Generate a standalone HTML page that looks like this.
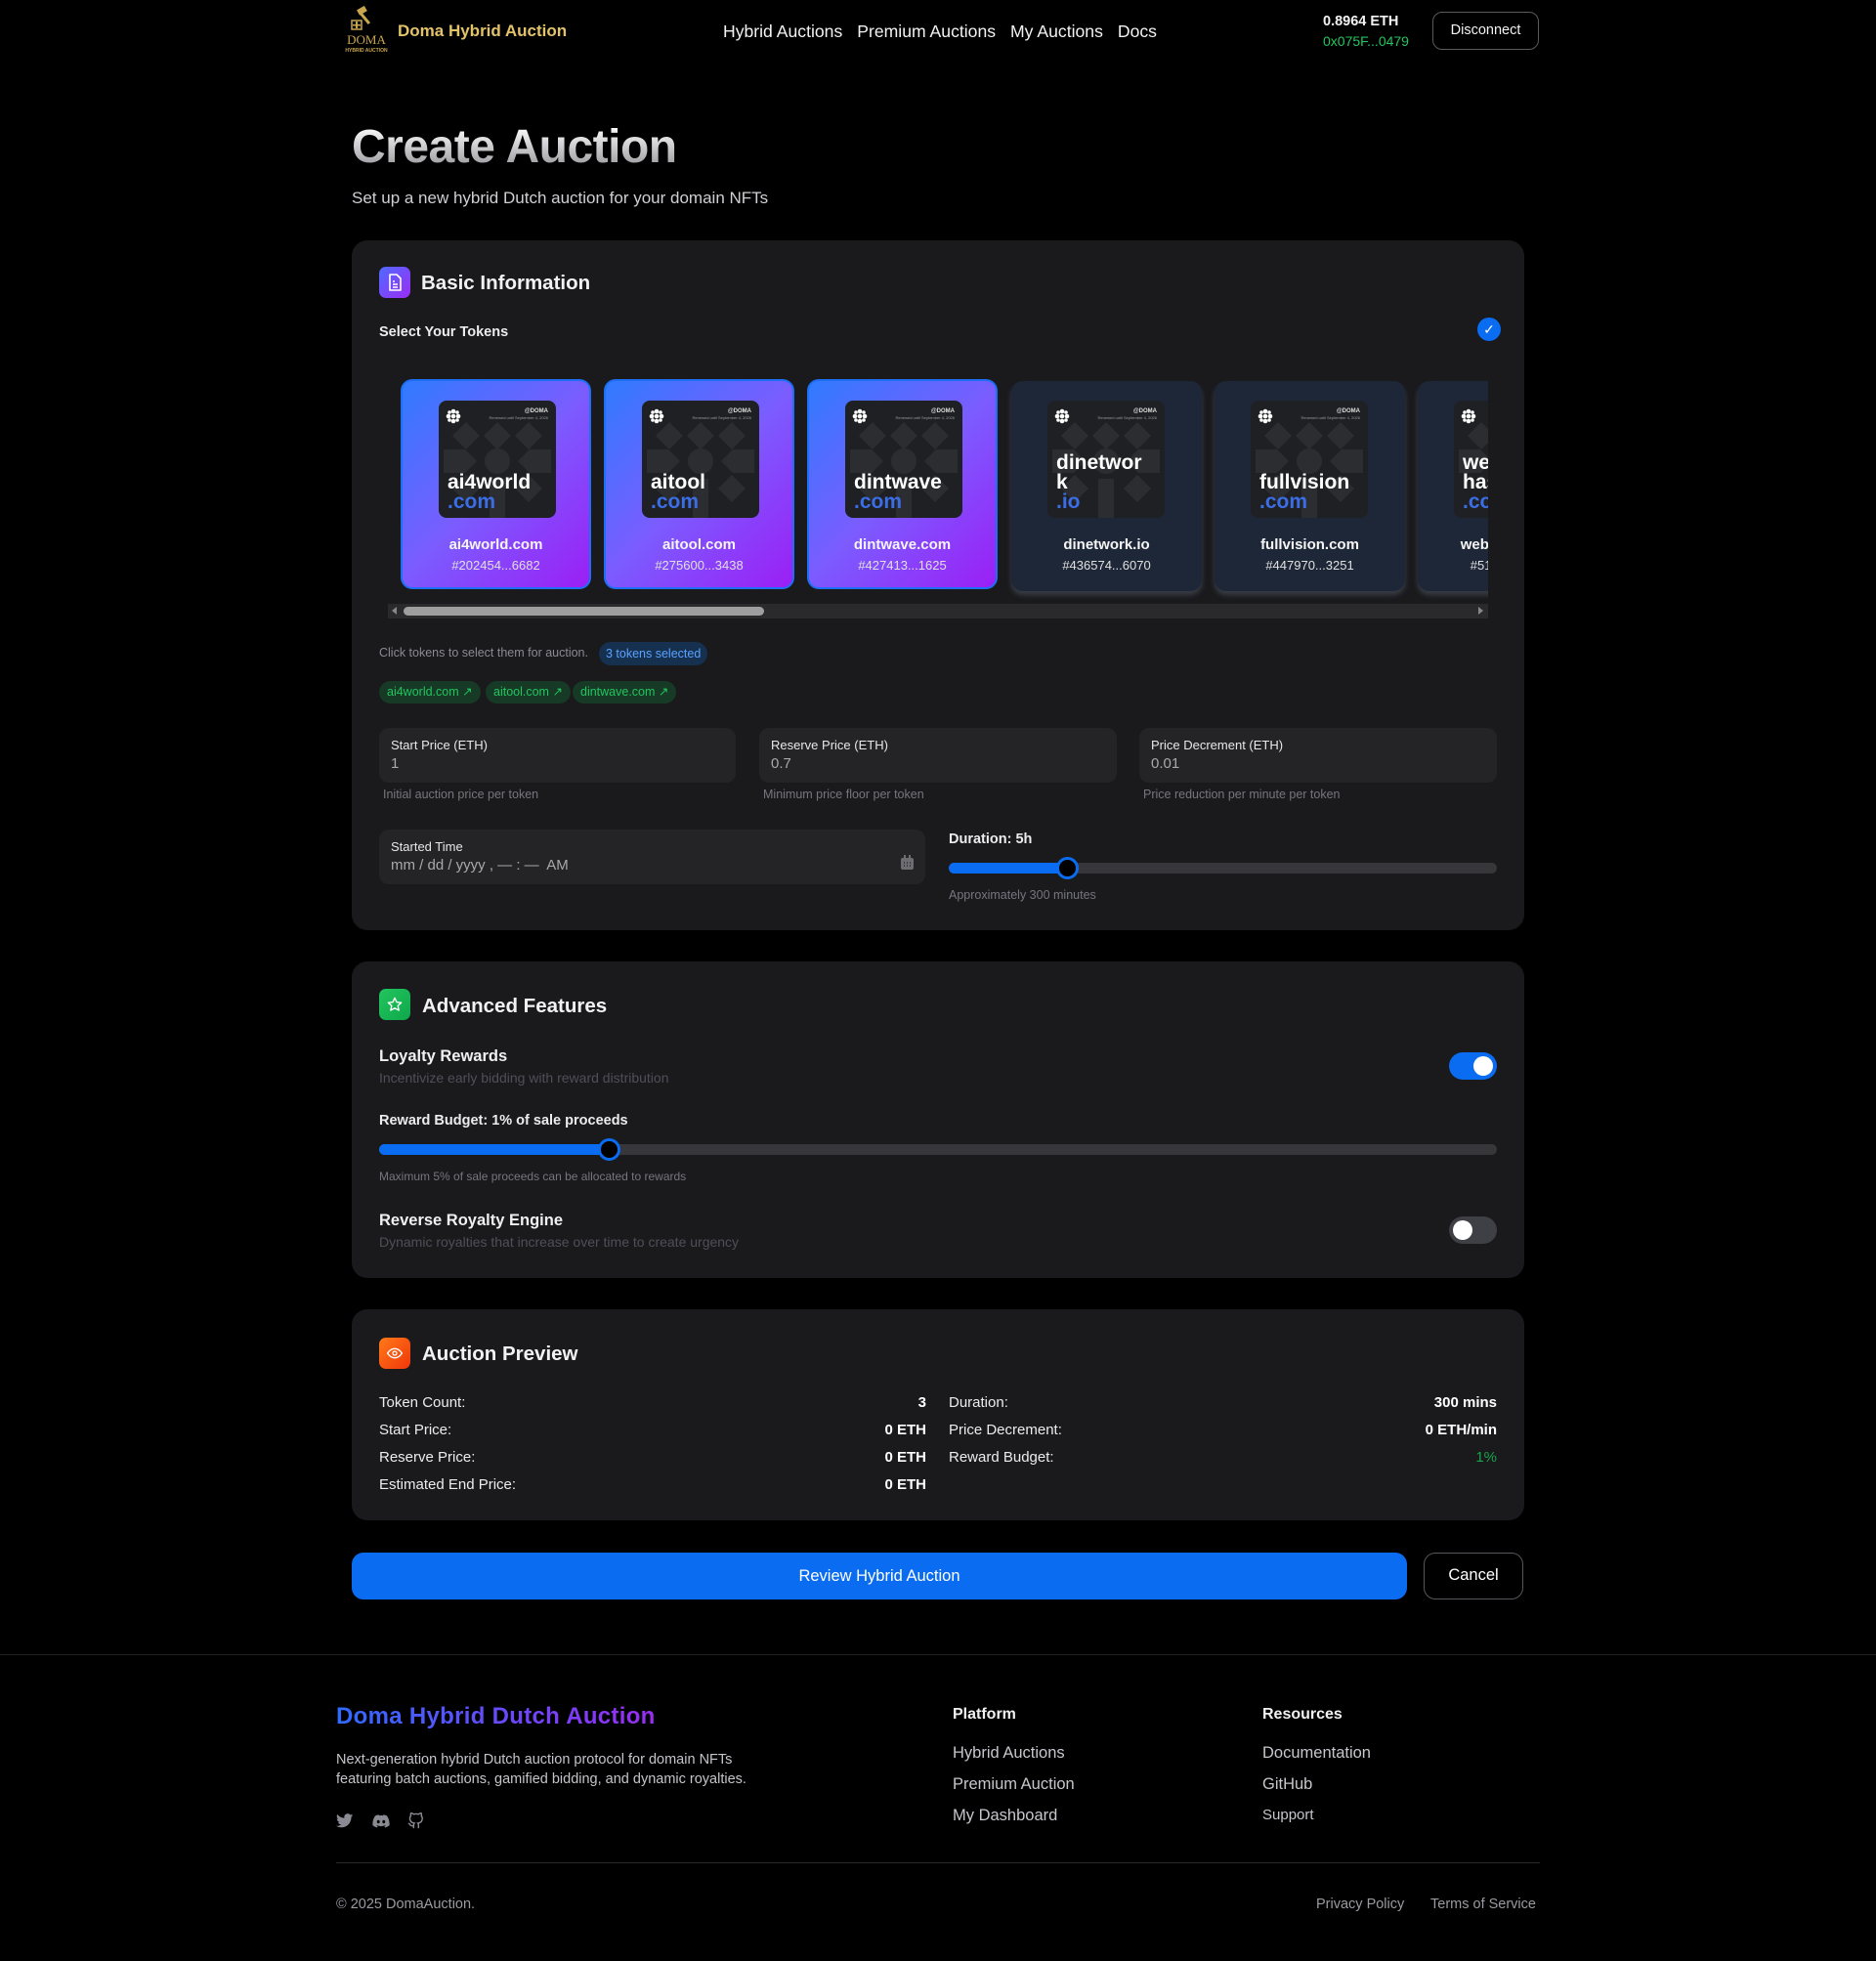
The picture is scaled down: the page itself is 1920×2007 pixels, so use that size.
<!DOCTYPE html>
<html><head><meta charset="utf-8"><style>
*{box-sizing:border-box;margin:0;padding:0}
body{width:1920px;height:2007px;background:#000;font-family:"Liberation Sans",sans-serif;color:#fff;position:relative;overflow:hidden}
.a{position:absolute;white-space:nowrap}
.card{position:absolute;left:360px;width:1200px;background:#1a1a1d;border-radius:16px}
.ic{position:absolute;width:32px;height:32px;border-radius:7px;display:flex;align-items:center;justify-content:center}
.h2{font-size:20.5px;font-weight:bold;color:#f2f2f2}
.tok{position:absolute;top:388px;width:195px;height:215px;border-radius:12px}
.sel{background:linear-gradient(135deg,#2f7bff 0%,#7b5cff 50%,#9b1ff5 100%);border:2px solid #1d6ff5}
.uns{background:#1e2737;box-shadow:0 4px 6px rgba(120,130,150,.35)}
.img{position:absolute;left:37px;top:20px;width:120px;height:120px;background:#1f2023;border-radius:8px;overflow:hidden}
.tn{position:absolute;left:0;width:100%;text-align:center;top:159px;font-size:15px;font-weight:bold;color:#f5f5f5}
.ti{position:absolute;left:0;width:100%;text-align:center;top:181px;font-size:13px;color:#e0e0e0}
.nm{position:absolute;left:9px;font-size:21px;font-weight:bold;line-height:20px;color:#fff}
.nm b{color:#3b6ee6}
.inp{position:absolute;background:#242427;border-radius:10px}
.lbl{position:absolute;left:12px;top:10px;font-size:13px;color:#e8e8e8}
.val{position:absolute;left:12px;top:28px;font-size:15px;color:#a8a8ad}
.help{position:absolute;font-size:12.5px;color:#76767e}
.track{position:absolute;height:11px;border-radius:6px;background:#36363b}
.fill{position:absolute;left:0;top:0;height:11px;border-radius:6px 0 0 6px;background:#0a6cf0}
.thumb{position:absolute;top:-6px;width:23px;height:23px;border-radius:50%;background:#000;border:3px solid #0a6cf0}
.row{position:absolute;font-size:15px;color:#ececec}
.rv{position:absolute;font-size:15px;font-weight:bold;text-align:right;color:#fff}
.chip{position:absolute;top:697px;height:23px;border-radius:12px;background:#163a25;color:#22c55e;font-size:12.5px;line-height:23px;padding:0 8px}
.fl{position:absolute;font-size:16.5px;color:#c6c6cc}
.nav{position:absolute;left:740px;top:22px;display:flex;gap:15px;font-size:17.6px;color:#f2f2f2;white-space:nowrap}
</style></head><body>

<svg class="a" style="left:348px;top:6px" width="54" height="48" viewBox="0 0 54 48">
<g fill="#c9a54f"><rect x="18" y="2" width="9" height="6" transform="rotate(-30 22 5)"/><rect x="24" y="6" width="3" height="14" transform="rotate(-40 25 13)"/><rect x="12" y="15" width="10" height="9" fill="none" stroke="#c9a54f" stroke-width="1.5"/><rect x="16" y="16" width="2" height="7"/><rect x="13" y="19" width="8" height="1.5"/></g>
<text x="27" y="39" text-anchor="middle" font-family="Liberation Serif" font-size="13" fill="#c9a54f">DOMA</text>
<text x="27" y="47" text-anchor="middle" font-family="Liberation Sans" font-size="5" font-weight="bold" fill="#c9a54f">HYBRID AUCTION</text></svg>
<div class="a" style="left:407px;top:22px;font-size:17px;font-weight:bold;color:#e3c36a">Doma Hybrid Auction</div>
<div class="nav"><span>Hybrid Auctions</span><span>Premium Auctions</span><span>My Auctions</span><span>Docs</span></div>
<div class="a" style="left:1354px;top:14px;font-size:14.5px;font-weight:bold;color:#f2f2f2">0.8964 ETH</div>
<div class="a" style="left:1354px;top:34px;font-size:14px;color:#22c55e">0x075F...0479</div>
<div class="a" style="left:1466px;top:12px;width:109px;height:39px;border:1.5px solid #5a5a5f;border-radius:10px;text-align:center;line-height:36px;font-size:14.5px;color:#f2f2f2">Disconnect</div>

<div class="a" style="left:360px;top:123px;font-size:48px;font-weight:bold;background:linear-gradient(180deg,#ffffff 10%,#8a8a8f 100%);-webkit-background-clip:text;color:transparent;letter-spacing:-0.5px">Create Auction</div>
<div class="a" style="left:360px;top:193px;font-size:17px;color:#cfcfd4">Set up a new hybrid Dutch auction for your domain NFTs</div>

<div class="card" style="top:246px;height:706px"></div>
<div class="ic" style="left:388px;top:273px;background:linear-gradient(135deg,#4f6bff,#9b2cf5)"><svg width="16" height="18" viewBox="0 0 16 18"><path d="M3 1h7l4 4v12H3z" fill="none" stroke="#fff" stroke-width="1.6" stroke-linejoin="round"/><path d="M6 8h2M6 11h5M6 14h5" stroke="#fff" stroke-width="1.5"/></svg></div>
<div class="a h2" style="left:431px;top:278px">Basic Information</div>
<div class="a" style="left:388px;top:332px;font-size:14.5px;font-weight:bold;color:#ececec">Select Your Tokens</div>
<div class="a" style="left:1512px;top:325px;width:24px;height:24px;border-radius:50%;background:#0a6cf0;color:#fff;font-size:14px;text-align:center;line-height:24px">✓</div>

<div class="a" style="left:397px;top:380px;width:1126px;height:235px;overflow:hidden">
 <div class="tok sel" style="left:13px;top:8px"><div class="img"><svg width="120" height="120"><g fill="#2c2d31"><path d="M28 22l14 14-14 14-14-14z M60 22l14 14-14 14-14-14z M92 22l14 14-14 14-14-14z"/><path d="M5 50h22l12 12-12 12H5z M115 50H93L81 62l12 12h22z"/><circle cx="60" cy="62" r="13"/><path d="M28 76l14 14-14 14-14-14z M92 76l14 14-14 14-14-14z M52 80h16v40H52z"/></g><g fill="#fff"><circle cx="15" cy="16" r="2.3"/><circle cx="20" cy="16" r="2.3"/><circle cx="10" cy="16" r="2.3"/><circle cx="15" cy="11" r="2.3"/><circle cx="15" cy="21" r="2.3"/><circle cx="11" cy="12" r="1.8"/><circle cx="19" cy="12" r="1.8"/><circle cx="11" cy="20" r="1.8"/><circle cx="19" cy="20" r="1.8"/></g><text x="112" y="12" text-anchor="end" font-size="6" font-weight="bold" fill="#ddd">@DOMA</text><text x="112" y="19" text-anchor="end" font-size="4" fill="#999">Renewed until September 4, 2026</text></svg><div class="nm" style="top:74px">ai4world<br><b>.com</b></div></div><div class="tn">ai4world.com</div><div class="ti">#202454...6682</div></div>
 <div class="tok sel" style="left:221px;top:8px"><div class="img"><svg width="120" height="120"><g fill="#2c2d31"><path d="M28 22l14 14-14 14-14-14z M60 22l14 14-14 14-14-14z M92 22l14 14-14 14-14-14z"/><path d="M5 50h22l12 12-12 12H5z M115 50H93L81 62l12 12h22z"/><circle cx="60" cy="62" r="13"/><path d="M28 76l14 14-14 14-14-14z M92 76l14 14-14 14-14-14z M52 80h16v40H52z"/></g><g fill="#fff"><circle cx="15" cy="16" r="2.3"/><circle cx="20" cy="16" r="2.3"/><circle cx="10" cy="16" r="2.3"/><circle cx="15" cy="11" r="2.3"/><circle cx="15" cy="21" r="2.3"/><circle cx="11" cy="12" r="1.8"/><circle cx="19" cy="12" r="1.8"/><circle cx="11" cy="20" r="1.8"/><circle cx="19" cy="20" r="1.8"/></g><text x="112" y="12" text-anchor="end" font-size="6" font-weight="bold" fill="#ddd">@DOMA</text><text x="112" y="19" text-anchor="end" font-size="4" fill="#999">Renewed until September 4, 2026</text></svg><div class="nm" style="top:74px">aitool<br><b>.com</b></div></div><div class="tn">aitool.com</div><div class="ti">#275600...3438</div></div>
 <div class="tok sel" style="left:429px;top:8px"><div class="img"><svg width="120" height="120"><g fill="#2c2d31"><path d="M28 22l14 14-14 14-14-14z M60 22l14 14-14 14-14-14z M92 22l14 14-14 14-14-14z"/><path d="M5 50h22l12 12-12 12H5z M115 50H93L81 62l12 12h22z"/><circle cx="60" cy="62" r="13"/><path d="M28 76l14 14-14 14-14-14z M92 76l14 14-14 14-14-14z M52 80h16v40H52z"/></g><g fill="#fff"><circle cx="15" cy="16" r="2.3"/><circle cx="20" cy="16" r="2.3"/><circle cx="10" cy="16" r="2.3"/><circle cx="15" cy="11" r="2.3"/><circle cx="15" cy="21" r="2.3"/><circle cx="11" cy="12" r="1.8"/><circle cx="19" cy="12" r="1.8"/><circle cx="11" cy="20" r="1.8"/><circle cx="19" cy="20" r="1.8"/></g><text x="112" y="12" text-anchor="end" font-size="6" font-weight="bold" fill="#ddd">@DOMA</text><text x="112" y="19" text-anchor="end" font-size="4" fill="#999">Renewed until September 4, 2026</text></svg><div class="nm" style="top:74px">dintwave<br><b>.com</b></div></div><div class="tn">dintwave.com</div><div class="ti">#427413...1625</div></div>
 <div class="tok uns" style="left:638px;top:10px"><div class="img"><svg width="120" height="120"><g fill="#2c2d31"><path d="M28 22l14 14-14 14-14-14z M60 22l14 14-14 14-14-14z M92 22l14 14-14 14-14-14z"/><path d="M5 50h22l12 12-12 12H5z M115 50H93L81 62l12 12h22z"/><circle cx="60" cy="62" r="13"/><path d="M28 76l14 14-14 14-14-14z M92 76l14 14-14 14-14-14z M52 80h16v40H52z"/></g><g fill="#fff"><circle cx="15" cy="16" r="2.3"/><circle cx="20" cy="16" r="2.3"/><circle cx="10" cy="16" r="2.3"/><circle cx="15" cy="11" r="2.3"/><circle cx="15" cy="21" r="2.3"/><circle cx="11" cy="12" r="1.8"/><circle cx="19" cy="12" r="1.8"/><circle cx="11" cy="20" r="1.8"/><circle cx="19" cy="20" r="1.8"/></g><text x="112" y="12" text-anchor="end" font-size="6" font-weight="bold" fill="#ddd">@DOMA</text><text x="112" y="19" text-anchor="end" font-size="4" fill="#999">Renewed until September 4, 2026</text></svg><div class="nm" style="top:54px">dinetwor<br>k<br><b>.io</b></div></div><div class="tn">dinetwork.io</div><div class="ti">#436574...6070</div></div>
 <div class="tok uns" style="left:846px;top:10px"><div class="img"><svg width="120" height="120"><g fill="#2c2d31"><path d="M28 22l14 14-14 14-14-14z M60 22l14 14-14 14-14-14z M92 22l14 14-14 14-14-14z"/><path d="M5 50h22l12 12-12 12H5z M115 50H93L81 62l12 12h22z"/><circle cx="60" cy="62" r="13"/><path d="M28 76l14 14-14 14-14-14z M92 76l14 14-14 14-14-14z M52 80h16v40H52z"/></g><g fill="#fff"><circle cx="15" cy="16" r="2.3"/><circle cx="20" cy="16" r="2.3"/><circle cx="10" cy="16" r="2.3"/><circle cx="15" cy="11" r="2.3"/><circle cx="15" cy="21" r="2.3"/><circle cx="11" cy="12" r="1.8"/><circle cx="19" cy="12" r="1.8"/><circle cx="11" cy="20" r="1.8"/><circle cx="19" cy="20" r="1.8"/></g><text x="112" y="12" text-anchor="end" font-size="6" font-weight="bold" fill="#ddd">@DOMA</text><text x="112" y="19" text-anchor="end" font-size="4" fill="#999">Renewed until September 4, 2026</text></svg><div class="nm" style="top:74px">fullvision<br><b>.com</b></div></div><div class="tn">fullvision.com</div><div class="ti">#447970...3251</div></div>
 <div class="tok uns" style="left:1054px;top:10px"><div class="img"><svg width="120" height="120"><g fill="#2c2d31"><path d="M28 22l14 14-14 14-14-14z M60 22l14 14-14 14-14-14z"/><path d="M5 50h22l12 12-12 12H5z"/><circle cx="60" cy="62" r="13"/></g><g fill="#fff"><circle cx="15" cy="16" r="2.3"/><circle cx="20" cy="16" r="2.3"/><circle cx="10" cy="16" r="2.3"/><circle cx="15" cy="11" r="2.3"/><circle cx="15" cy="21" r="2.3"/><circle cx="11" cy="12" r="1.8"/><circle cx="19" cy="12" r="1.8"/><circle cx="11" cy="20" r="1.8"/><circle cx="19" cy="20" r="1.8"/></g></svg><div class="nm" style="top:54px">web3<br>hash<br><b>.com</b></div></div><div class="tn">web3hash.com</div><div class="ti">#512345...1111</div></div>
</div>
<div class="a" style="left:397px;top:618px;width:1126px;height:15px;background:#2a2a2c"></div>
<div class="a" style="left:413px;top:621px;width:369px;height:9px;border-radius:5px;background:#9e9e9e"></div>
<div class="a" style="left:401px;top:621px;width:0;height:0;border-top:4px solid transparent;border-bottom:4px solid transparent;border-right:5px solid #888"></div>
<div class="a" style="left:1513px;top:621px;width:0;height:0;border-top:4px solid transparent;border-bottom:4px solid transparent;border-left:5px solid #888"></div>

<div class="a" style="left:388px;top:661px;font-size:12.5px;color:#8a8a92">Click tokens to select them for auction.</div>
<div class="a" style="left:613px;top:657px;height:24px;padding:0 7px;border-radius:12px;background:#16304f;color:#5aa2ff;font-size:12.5px;line-height:24px">3 tokens selected</div>
<div class="chip" style="left:388px">ai4world.com ↗</div>
<div class="chip" style="left:497px">aitool.com ↗</div>
<div class="chip" style="left:586px">dintwave.com ↗</div>

<div class="inp" style="left:388px;top:745px;width:365px;height:56px"><div class="lbl">Start Price (ETH)</div><div class="val">1</div></div>
<div class="inp" style="left:777px;top:745px;width:366px;height:56px"><div class="lbl">Reserve Price (ETH)</div><div class="val">0.7</div></div>
<div class="inp" style="left:1166px;top:745px;width:366px;height:56px"><div class="lbl">Price Decrement (ETH)</div><div class="val">0.01</div></div>
<div class="help" style="left:392px;top:806px">Initial auction price per token</div>
<div class="help" style="left:781px;top:806px">Minimum price floor per token</div>
<div class="help" style="left:1170px;top:806px">Price reduction per minute per token</div>

<div class="inp" style="left:388px;top:849px;width:559px;height:56px"><div class="lbl">Started Time</div><div class="val">mm / dd / yyyy , — : —&nbsp; AM</div>
<svg style="position:absolute;right:12px;top:26px" width="13" height="15" viewBox="0 0 13 15"><rect x="0" y="3" width="13" height="12" rx="2" fill="#6c6c72"/><rect x="3" y="0" width="2" height="4" fill="#6c6c72"/><rect x="8" y="0" width="2" height="4" fill="#6c6c72"/><path d="M3 8h1M6 8h1M9 8h1M3 11h1M6 11h1M9 11h1" stroke="#2a2a2d" stroke-width="1.5"/></svg></div>
<div class="a" style="left:971px;top:851px;font-size:14.5px;font-weight:bold;color:#ececec">Duration: 5h</div>
<div class="track" style="left:971px;top:883px;width:561px"><div class="fill" style="width:121px"></div><div class="thumb" style="left:110px"></div></div>
<div class="a help" style="left:971px;top:909px">Approximately 300 minutes</div>

<div class="card" style="top:984px;height:324px"></div>
<div class="ic" style="left:388px;top:1012px;background:linear-gradient(135deg,#22c55e,#0ea84a)"><svg width="16" height="16" viewBox="0 0 24 24"><path d="M12 2l3 6.5 7 .8-5.2 4.8 1.5 7L12 17.6 5.7 21.1l1.5-7L2 9.3l7-.8z" fill="none" stroke="#fff" stroke-width="2" stroke-linejoin="round"/></svg></div>
<div class="a h2" style="left:432px;top:1018px">Advanced Features</div>
<div class="a" style="left:388px;top:1072px;font-size:16.5px;font-weight:bold;color:#f0f0f0">Loyalty Rewards</div>
<div class="a" style="left:388px;top:1095px;font-size:14px;color:#4f4f58">Incentivize early bidding with reward distribution</div>
<div class="a" style="left:1483px;top:1077px;width:49px;height:28px;border-radius:14px;background:#0a6cf0"><div style="position:absolute;right:4px;top:4px;width:20px;height:20px;border-radius:50%;background:#fff"></div></div>
<div class="a" style="left:388px;top:1139px;font-size:14.5px;font-weight:bold;color:#ececec">Reward Budget: 1% of sale proceeds</div>
<div class="track" style="left:388px;top:1171px;width:1144px"><div class="fill" style="width:236px"></div><div class="thumb" style="left:224px"></div></div>
<div class="a help" style="left:388px;top:1197px;font-size:12px">Maximum 5% of sale proceeds can be allocated to rewards</div>
<div class="a" style="left:388px;top:1240px;font-size:16.5px;font-weight:bold;color:#f0f0f0">Reverse Royalty Engine</div>
<div class="a" style="left:388px;top:1263px;font-size:14px;color:#4f4f58">Dynamic royalties that increase over time to create urgency</div>
<div class="a" style="left:1483px;top:1245px;width:49px;height:28px;border-radius:14px;background:#3f3f46"><div style="position:absolute;left:4px;top:4px;width:20px;height:20px;border-radius:50%;background:#fff"></div></div>

<div class="card" style="top:1340px;height:216px"></div>
<div class="ic" style="left:388px;top:1369px;background:linear-gradient(135deg,#ff7a1a,#f0360a)"><svg width="16" height="16" viewBox="0 0 24 24"><path d="M1 12s4-7 11-7 11 7 11 7-4 7-11 7S1 12 1 12z" fill="none" stroke="#fff" stroke-width="2"/><circle cx="12" cy="12" r="3" fill="none" stroke="#fff" stroke-width="2"/></svg></div>
<div class="a h2" style="left:432px;top:1374px">Auction Preview</div>
<div class="row" style="left:388px;top:1427px">Token Count:</div><div class="rv" style="left:800px;width:148px;top:1427px">3</div>
<div class="row" style="left:388px;top:1455px">Start Price:</div><div class="rv" style="left:800px;width:148px;top:1455px">0 ETH</div>
<div class="row" style="left:388px;top:1483px">Reserve Price:</div><div class="rv" style="left:800px;width:148px;top:1483px">0 ETH</div>
<div class="row" style="left:388px;top:1511px">Estimated End Price:</div><div class="rv" style="left:800px;width:148px;top:1511px">0 ETH</div>
<div class="row" style="left:971px;top:1427px">Duration:</div><div class="rv" style="left:1380px;width:152px;top:1427px">300 mins</div>
<div class="row" style="left:971px;top:1455px">Price Decrement:</div><div class="rv" style="left:1380px;width:152px;top:1455px">0 ETH/min</div>
<div class="row" style="left:971px;top:1483px">Reward Budget:</div><div class="rv" style="left:1380px;width:152px;top:1483px;font-weight:normal;color:#16a34a">1%</div>

<div class="a" style="left:360px;top:1589px;width:1080px;height:48px;border-radius:12px;background:#0a6cf0;text-align:center;line-height:48px;font-size:16.5px;color:#fff">Review Hybrid Auction</div>
<div class="a" style="left:1457px;top:1589px;width:102px;height:48px;border-radius:12px;border:1.5px solid #56565c;text-align:center;line-height:45px;font-size:16.5px;color:#fff">Cancel</div>

<div class="a" style="left:0;top:1693px;width:1920px;height:1px;background:#1f1f22"></div>
<div class="a" style="left:344px;top:1743px;font-size:24px;font-weight:bold;background:linear-gradient(90deg,#2f6bff,#9b2cf5);-webkit-background-clip:text;color:transparent;letter-spacing:0.3px">Doma Hybrid Dutch Auction</div>
<div class="a" style="left:344px;top:1791px;font-size:14.5px;line-height:20px;color:#c4c4ca">Next-generation hybrid Dutch auction protocol for domain NFTs<br>featuring batch auctions, gamified bidding, and dynamic royalties.</div>
<svg class="a" style="left:344px;top:1856px" width="18" height="16" viewBox="0 0 24 20"><path d="M23 2a9 9 0 0 1-2.7.8A4.7 4.7 0 0 0 22.4.2a9.4 9.4 0 0 1-3 1.1A4.7 4.7 0 0 0 11.3 5.6 13.3 13.3 0 0 1 1.6.7a4.7 4.7 0 0 0 1.5 6.3A4.6 4.6 0 0 1 1 6.4a4.7 4.7 0 0 0 3.8 4.6 4.7 4.7 0 0 1-2.1.1 4.7 4.7 0 0 0 4.4 3.3A9.4 9.4 0 0 1 0 16.3 13.3 13.3 0 0 0 7.2 18.4c8.6 0 13.4-7.200 13.4-13.4v-.6A9.5 9.5 0 0 0 23 2z" fill="#8a8a92"/></svg>
<svg class="a" style="left:381px;top:1857px" width="18" height="14" viewBox="0 0 24 18"><path d="M20 1.5A19 19 0 0 0 15.3 0l-.6 1.2a17 17 0 0 0-5.4 0L8.7 0A19 19 0 0 0 4 1.5C1 6 .2 10.4.6 14.7A19 19 0 0 0 6.4 17.6l1.2-1.9a12 12 0 0 1-1.9-.9l.5-.4a13.5 13.5 0 0 0 11.6 0l.5.4a12 12 0 0 1-1.900.9l1.2 1.9a19 19 0 0 0 5.8-2.9c.5-5-.8-9.4-3.4-13.200zM8.3 12c-1.1 0-2-1-2-2.3s.9-2.3 2-2.3 2 1 2 2.3-.9 2.3-2 2.3zm7.4 0c-1.1 0-2-1-2-2.3s.9-2.3 2-2.3 2 1 2 2.3-.9 2.3-2 2.3z" fill="#8a8a92"/></svg>
<svg class="a" style="left:417px;top:1855px" width="17" height="17" viewBox="0 0 24 24"><path d="M9 19c-5 1.5-5-2.5-7-3m14 6v-3.9a3.4 3.4 0 0 0-.9-2.6c3.1-.4 6.4-1.5 6.4-7A5.4 5.4 0 0 0 20 4.8 5 5 0 0 0 19.9 1S18.7.6 16 2.5a13.4 13.4 0 0 0-7 0C6.3.6 5.1 1 5.1 1A5 5 0 0 0 5 4.8a5.4 5.4 0 0 0-1.5 3.7c0 5.4 3.3 6.6 6.4 7a3.4 3.4 0 0 0-.9 2.6V22" fill="none" stroke="#8a8a92" stroke-width="2" stroke-linecap="round"/></svg>
<div class="a" style="left:975px;top:1746px;font-size:16px;font-weight:bold;color:#f0f0f0">Platform</div>
<div class="fl a" style="left:975px;top:1785px">Hybrid Auctions</div>
<div class="fl a" style="left:975px;top:1817px">Premium Auction</div>
<div class="fl a" style="left:975px;top:1849px">My Dashboard</div>
<div class="a" style="left:1292px;top:1746px;font-size:16px;font-weight:bold;color:#f0f0f0">Resources</div>
<div class="fl a" style="left:1292px;top:1785px">Documentation</div>
<div class="fl a" style="left:1292px;top:1817px">GitHub</div>
<div class="fl a" style="left:1292px;top:1849px;font-size:15px">Support</div>
<div class="a" style="left:344px;top:1906px;width:1232px;height:1px;background:#2a2a2e"></div>
<div class="a" style="left:344px;top:1941px;font-size:14.5px;color:#9a9aa2">© 2025 DomaAuction.</div>
<div class="a" style="left:1347px;top:1941px;font-size:14.5px;color:#9a9aa2">Privacy Policy</div>
<div class="a" style="left:1464px;top:1941px;font-size:14.5px;color:#9a9aa2">Terms of Service</div>
</body></html>
